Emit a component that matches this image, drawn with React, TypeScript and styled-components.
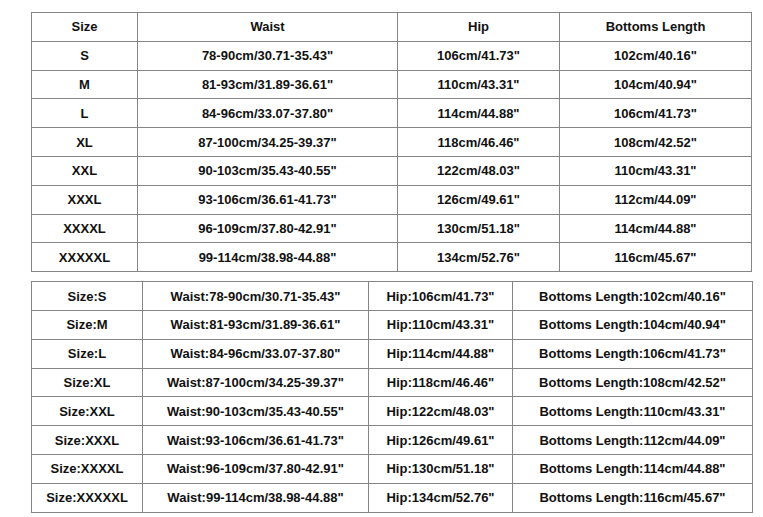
import React from 'react';
import styled, { createGlobalStyle } from 'styled-components';

const GlobalStyle = createGlobalStyle`
  html, body {
    margin: 0;
    padding: 0;
    background: #ffffff;
  }
`;

const Page = styled.div`
  width: 763px;
  height: 517px;
  box-sizing: border-box;
  padding: 12px 0 0 31px;
  display: flex;
  flex-direction: column;
  gap: 9px;
  background: #ffffff;
  font-family: "Liberation Sans", Arial, sans-serif;
`;

const Table = styled.table<{ $width: number }>`
  border-collapse: collapse;
  table-layout: fixed;
  width: ${({ $width }) => $width}px;
`;

const Col = styled.col<{ $width: number }>`
  width: ${({ $width }) => $width}px;
`;

const Row = styled.tr`
  height: 28.8px;
`;

const Cell = styled.td`
  border: 1px solid #858585;
  padding: 0;
  text-align: center;
  vertical-align: middle;
  font-size: 13px;
  line-height: 15px;
  font-weight: 700;
  color: #111111;
  white-space: nowrap;
`;

const sizes = [
  ['S', '78-90cm/30.71-35.43"', '106cm/41.73"', '102cm/40.16"'],
  ['M', '81-93cm/31.89-36.61"', '110cm/43.31"', '104cm/40.94"'],
  ['L', '84-96cm/33.07-37.80"', '114cm/44.88"', '106cm/41.73"'],
  ['XL', '87-100cm/34.25-39.37"', '118cm/46.46"', '108cm/42.52"'],
  ['XXL', '90-103cm/35.43-40.55"', '122cm/48.03"', '110cm/43.31"'],
  ['XXXL', '93-106cm/36.61-41.73"', '126cm/49.61"', '112cm/44.09"'],
  ['XXXXL', '96-109cm/37.80-42.91"', '130cm/51.18"', '114cm/44.88"'],
  ['XXXXXL', '99-114cm/38.98-44.88"', '134cm/52.76"', '116cm/45.67"'],
];

const labels = ['Size', 'Waist', 'Hip', 'Bottoms Length'];

function App() {
  return (
    <>
      <GlobalStyle />
      <Page>
        <Table $width={720}>
          <colgroup>
            <Col $width={106} />
            <Col $width={260} />
            <Col $width={162} />
            <Col $width={192} />
          </colgroup>
          <tbody>
            <Row>
              {labels.map((l) => <Cell key={l}>{l}</Cell>)}
            </Row>
            {sizes.map((row) => (
              <Row key={row[0]}>
                {row.map((v, i) => <Cell key={i}>{v}</Cell>)}
              </Row>
            ))}
          </tbody>
        </Table>
        <Table $width={721}>
          <colgroup>
            <Col $width={111} />
            <Col $width={226} />
            <Col $width={144} />
            <Col $width={240} />
          </colgroup>
          <tbody>
            {sizes.map((row) => (
              <Row key={row[0]}>
                {row.map((v, i) => <Cell key={i}>{labels[i]}:{v}</Cell>)}
              </Row>
            ))}
          </tbody>
        </Table>
      </Page>
    </>
  );
}

export default App;
